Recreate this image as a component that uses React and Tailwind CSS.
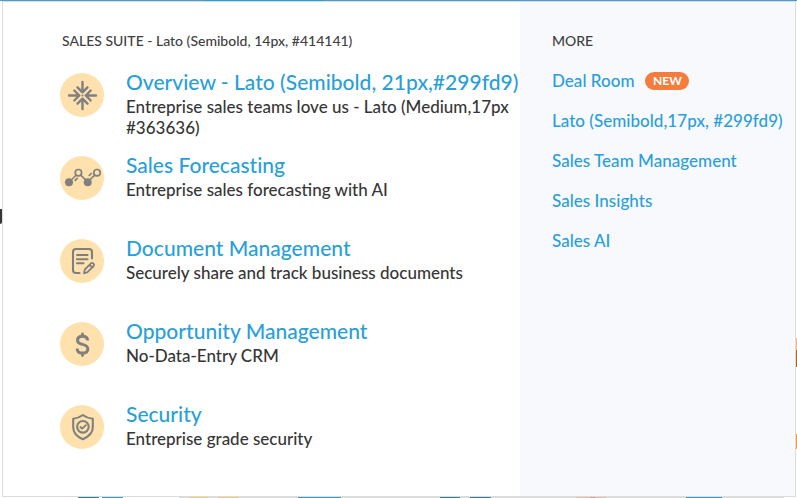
const items = [
  { title: 'Overview - Lato (Semibold, 21px,#299fd9)', text: 'Entreprise sales teams love us - Lato (Medium,17px #363636)', icon: Converge },
  { title: 'Sales Forecasting', text: 'Entreprise sales forecasting with AI', icon: Forecast },
  { title: 'Document Management', text: 'Securely share and track business documents', icon: Document },
  { title: 'Opportunity Management', text: 'No-Data-Entry CRM', icon: Dollar },
  { title: 'Security', text: 'Entreprise grade security', icon: Shield },
];

const links = ['Lato (Semibold,17px, #299fd9)', 'Sales Team Management', 'Sales Insights', 'Sales AI'];

function Badge({ children }) {
  return (
    <svg viewBox="0 0 44 44" className="size-11 shrink-0 rounded-full bg-[#fee1ac]" fill="none" stroke="#808080" strokeWidth="2.1" strokeLinecap="round" strokeLinejoin="round">
      {children}
    </svg>
  );
}

function Converge() {
  return (
    <Badge>
      <path strokeWidth="2.4" d="M22.5 9v10.3M22.5 36V25.7M9 22.5h10.3M36 22.5H25.7M17.5 14.3l5 5 5-5M17.5 30.7l5-5 5 5M14.3 17.5l5 5-5 5M30.7 17.5l-5 5 5 5" />
      <circle cx="22.5" cy="22.5" r="1" fill="#808080" stroke="none" />
    </Badge>
  );
}

function Forecast() {
  return (
    <Badge>
      <circle cx="9" cy="26.2" r="4" fill="#808080" stroke="none" />
      <circle cx="27.7" cy="26.2" r="4" fill="#808080" stroke="none" />
      <circle cx="18.4" cy="16.7" r="3.2" strokeWidth="1.7" />
      <circle cx="37" cy="16.7" r="3.2" strokeWidth="1.7" />
      <path strokeWidth="1.5" d="M9.5 25.7l6.5-6.5M20.8 19.1l6 6M28.4 25.4l6.3-6.3" />
      <path strokeWidth="1.7" strokeLinecap="butt" d="M14.7 24.9l3-3M28.8 20l3-3" />
    </Badge>
  );
}

function Document() {
  return (
    <Badge>
      <path d="M19.5 34H16a3 3 0 0 1-3-3V13a3 3 0 0 1 3-3h13a3 3 0 0 1 3 3v6.5M17 16h10.5M17 20.2h10.5M17 24.3h6.5" />
      <path strokeWidth="1.8" d="M24 34.3l.8-3.8 6.2-6.2q1.1-1 2.3.1l.3.3q1.1 1.2.1 2.3l-6.2 6.2zM29.7 25.8l2.6 2.6" />
    </Badge>
  );
}

function Dollar() {
  return (
    <Badge>
      <path strokeWidth="3" strokeLinecap="butt" d="M27.6 18.6c0-3-2-4.4-5.1-4.4s-5 1.6-5 4 1.8 3.4 5 4.2c3.3.8 5.3 1.9 5.3 4.5s-2.1 4.2-5.3 4.2c-3.4 0-5.3-1.6-5.3-4.7" />
      <path strokeWidth="2.8" d="M22.5 11.8v2M22.5 31.5v2" />
    </Badge>
  );
}

function Shield() {
  return (
    <Badge>
      <path d="M22.8 10c2.6 2 6 3.4 10 3.8v8.4c0 5.4-4.4 9.5-10 12-5.6-2.5-9.6-6.6-9.6-12v-8.4c3.8-.4 7-1.8 9.6-3.8z" />
      <circle cx="22.9" cy="21.8" r="5.8" />
      <path strokeWidth="1.8" d="M20.4 22l1.8 1.7 3.6-3.6" />
    </Badge>
  );
}

export default function App() {
  return (
    <div className="relative h-[498px] w-[797px] overflow-hidden bg-white font-[Lato,sans-serif]">
      <div className="h-px bg-[#4a9ad4]" />
      <div className="ml-[2px] flex h-[496px] w-[794px] border border-[#dcdcdc] bg-white">
        <main className="w-[517px] shrink-0 pt-[30px] pl-[57px]">
          <h2 className="ml-[2px] h-[18px] text-[14px] leading-[18px] font-medium whitespace-nowrap text-[#414141]">SALES SUITE - Lato (Semibold, 14px, #414141)</h2>
          <ul className="pt-[18px]">
            {items.map(({ title, text, icon: Icon }) => (
              <li key={title} className="flex h-[83px] gap-[22px]">
                <div className="pt-[5px]"><Icon /></div>
                <div>
                  <h3 className="text-[21px] leading-[27px] font-medium tracking-[0.02px] whitespace-nowrap text-[#299fd9]">{title}</h3>
                  <p className="w-[390px] pt-px text-[17px] leading-[21px] font-medium text-[#363636]">{text}</p>
                </div>
              </li>
            ))}
          </ul>
        </main>
        <aside className="grow bg-[#f8f9fd] pt-[30px] pl-8 whitespace-nowrap">
          <h2 className="text-[14px] leading-[18px] font-medium text-[#414141]">MORE</h2>
          <nav className="pt-[11px] text-[17px] font-medium tracking-[0.03px] text-[#299fd9]">
            <div className="flex h-10 items-center">
              Deal Room
              <span className="ml-[11px] flex h-[18px] w-11 items-center justify-center rounded-full bg-[#f47c3c] text-[12px] font-bold text-white">NEW</span>
            </div>
            {links.map((link) => (
              <div key={link} className="flex h-10 items-center">{link}</div>
            ))}
          </nav>
        </aside>
      </div>
      <div className="flex h-px bg-[#dcdcdc]">
        <i className="w-[78px] bg-white" /><i className="w-[21px] bg-[#26869f]" /><i className="w-[3px] bg-white" /><i className="w-[21px] bg-[#299fd9]" /><i className="w-[56px] bg-white" />
        <i className="ml-[10px] w-[19px] bg-[#f7c66b]" /><i className="ml-[10px] w-[20px] bg-[#f7c66b]" /><i className="ml-[60px] w-[43px] bg-[#299fd9]" />
        <i className="ml-[99px] w-[20px] bg-[#26869f]" /><i className="ml-[10px] w-[21px] bg-[#26869f]" />
        <i className="ml-[85px] w-[14px] bg-[#f5b89b]" /><i className="w-[5px] bg-[#ee9186]" /><i className="w-[11px] bg-[#f5b89b]" />
        <i className="ml-[80px] w-[36px] bg-[#299fd9]" /><i className="ml-[62px] grow bg-white" />
      </div>
      <div className="absolute top-[209px] left-0 h-[15px] w-[2px] rounded-br-[2px] bg-[#363636]" />
      <div className="absolute top-[338px] left-[796px] h-[12px] w-px bg-[#f5b690]" />
      <div className="absolute top-[350px] left-[796px] h-[17px] w-px bg-[#a86632]" />
      <div className="absolute top-[434px] left-[796px] h-[15px] w-px bg-[#f59a50]" />
      <div className="absolute top-0 left-[205px] h-px w-[119px] bg-[#22a0dd]" />
    </div>
  );
}
